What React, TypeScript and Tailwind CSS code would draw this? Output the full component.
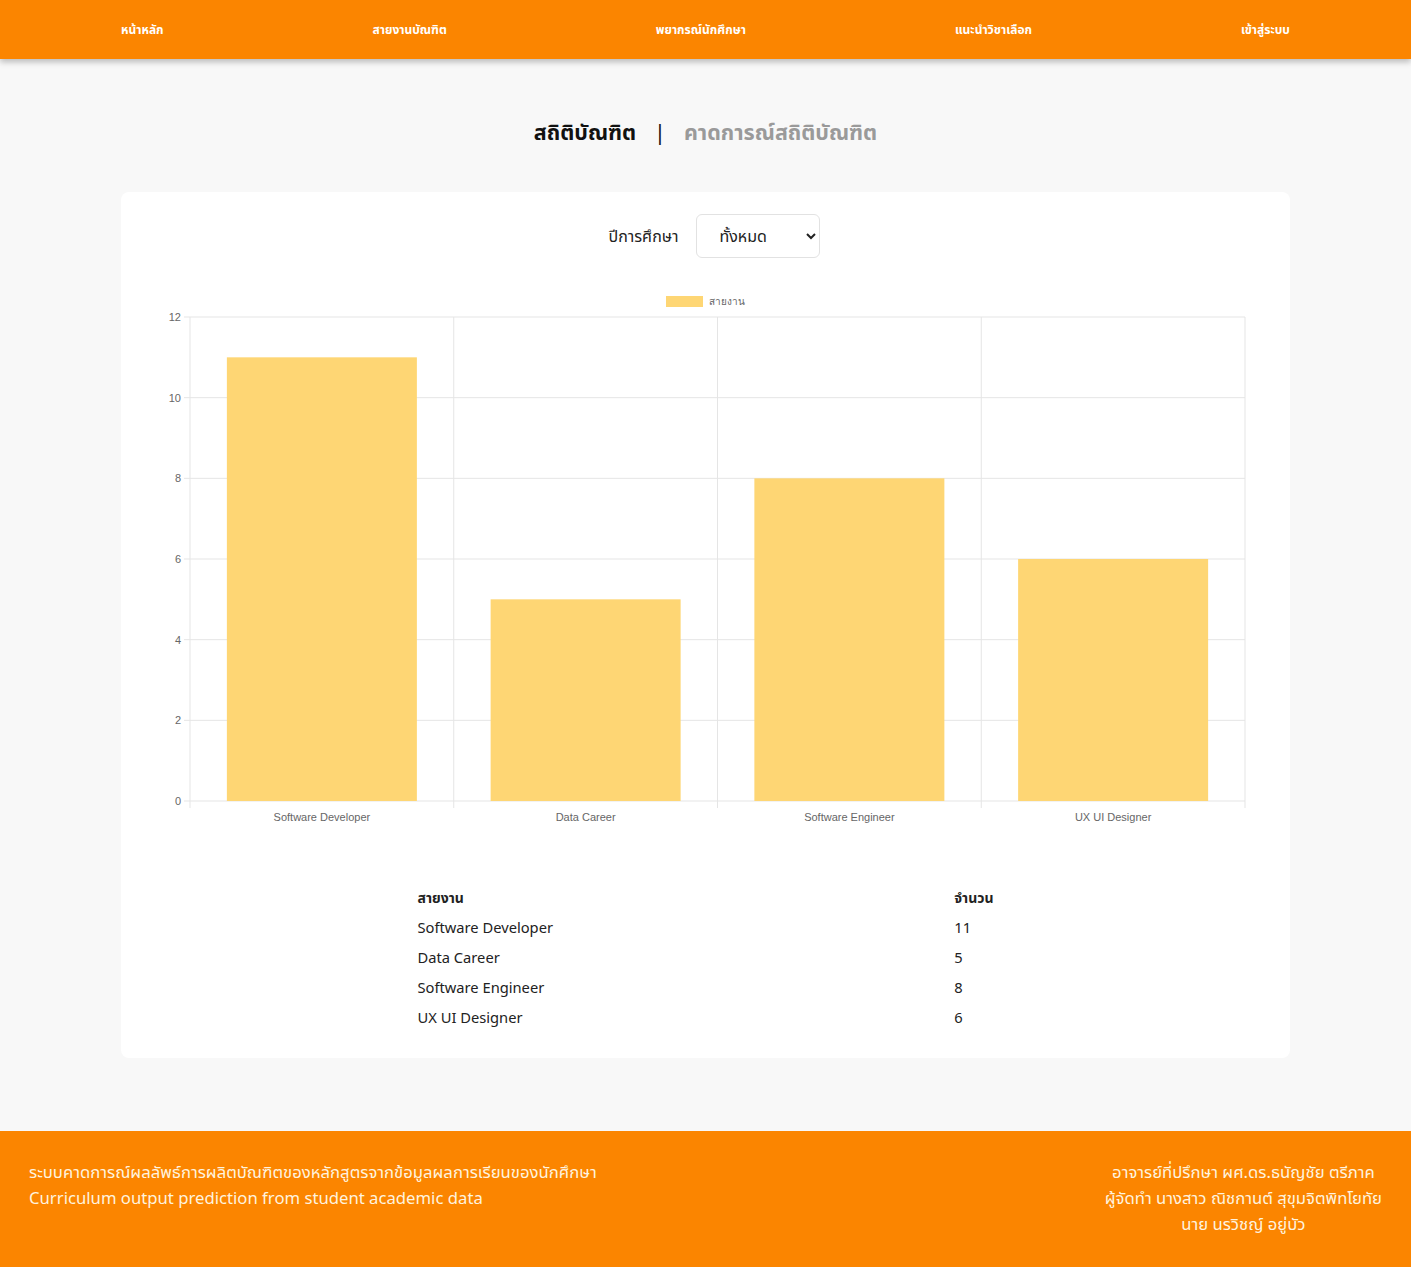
const navItems = ["หน้าหลัก", "สายงานบัณฑิต", "พยากรณ์นักศึกษา", "แนะนำวิชาเลือก", "เข้าสู่ระบบ"];

const careers = [
  { name: "Software Developer", count: 11 },
  { name: "Data Career", count: 5 },
  { name: "Software Engineer", count: 8 },
  { name: "UX UI Designer", count: 6 },
];

const font = "font-['Noto_Sans','Noto_Sans_Thai',sans-serif]";

function BarChart() {
  // plot coords inside svg (svg origin = card left, y 285 on page)
  const left = 69;
  const right = 1124;
  const top = 32;
  const bottom = 516;
  const max = 12;
  const step = (right - left) / careers.length;
  const yOf = (v: number) => bottom - ((bottom - top) * v) / max;
  const ticks = [0, 2, 4, 6, 8, 10, 12];

  return (
    <svg width="1169" height="550" viewBox="0 0 1169 550" className="block">
      {/* legend */}
      <rect x="545" y="11" width="37" height="11" fill="#fed674" />
      <text x="588" y="20" fontSize="10" fill="#666" fontFamily="Liberation Sans, sans-serif">
        สายงาน
      </text>

      {ticks.map((t) => (
        <g key={t}>
          <line x1={left - 6} x2={right} y1={yOf(t)} y2={yOf(t)} stroke="#e5e5e5" strokeWidth="1" />
          <text
            x={left - 9}
            y={yOf(t) + 4}
            fontSize="11"
            textAnchor="end"
            fill="#666"
            fontFamily="Liberation Sans, sans-serif"
          >
            {t}
          </text>
        </g>
      ))}

      {[0, 1, 2, 3, 4].map((i) => (
        <line
          key={i}
          x1={left + step * i}
          x2={left + step * i}
          y1={top}
          y2={bottom + 7}
          stroke="#e5e5e5"
          strokeWidth="1"
        />
      ))}

      {careers.map((c, i) => {
        const cx = left + step * i + step / 2;
        const w = 190;
        return (
          <g key={c.name}>
            <rect x={cx - w / 2} y={yOf(c.count)} width={w} height={bottom - yOf(c.count)} fill="#fed674" />
            <text
              x={cx}
              y={bottom + 20}
              fontSize="11"
              textAnchor="middle"
              fill="#666"
              fontFamily="Liberation Sans, sans-serif"
            >
              {c.name}
            </text>
          </g>
        );
      })}
    </svg>
  );
}

export default function App() {
  return (
    <div className={`min-h-screen bg-[#f8f8f8] ${font}`}>
      <nav className="relative z-10 flex h-[59px] items-center justify-between bg-[#fb8500] px-[121px] shadow-[0_3px_6px_rgba(0,0,0,0.25)]">
        {navItems.map((item) => (
          <a key={item} className="text-[12px] font-bold text-white" href="#">
            {item}
          </a>
        ))}
      </nav>

      <main className="px-[121px] pt-[57px] pb-[73px]">
        <div className="flex items-center justify-center gap-[18px] text-[21.5px] font-bold">
          <span className="text-[#111]">สถิติบัณฑิต</span>
          <span className="font-normal text-[#111]">|</span>
          <span className="text-[#9a9a9a]">คาดการณ์สถิติบัณฑิต</span>
        </div>

        <section className="mt-[44px] rounded-lg bg-white pt-[22px] pb-[26px]">
          <div className="flex items-center justify-center gap-[18px] pl-[18px]">
            <label className="text-[16px] text-[#222]">ปีการศึกษา</label>
            <select className="h-[44px] w-[124px] rounded-md border border-[#e2e2e2] bg-white pl-[18px] pr-2 text-[16px] text-[#222] outline-none">
              <option>ทั้งหมด</option>
            </select>
          </div>

          <div className="mt-[27px]">
            <BarChart />
          </div>

          <table className="mx-auto mt-[48px] w-[576px] text-left text-[14.7px] text-[#222]">
            <thead>
              <tr className="h-[29px]">
                <th className="w-[538px] text-[14px] font-bold">สายงาน</th>
                <th className="text-[14px] font-bold">จำนวน</th>
              </tr>
            </thead>
            <tbody>
              {careers.map((c) => (
                <tr key={c.name} className="h-[30px]">
                  <td>{c.name}</td>
                  <td>{c.count}</td>
                </tr>
              ))}
            </tbody>
          </table>
        </section>
      </main>

      <footer className="flex h-[136px] items-start justify-between bg-[#fb8500] px-[29px] pt-[28px] text-[16.7px] leading-[26px] text-[#fff3df]">
        <div>
          <p>ระบบคาดการณ์ผลลัพธ์การผลิตบัณฑิตของหลักสูตรจากข้อมูลผลการเรียนของนักศึกษา</p>
          <p>Curriculum output prediction from student academic data</p>
        </div>
        <div className="text-center">
          <p>อาจารย์ที่ปรึกษา ผศ.ดร.ธนัญชัย ตรีภาค</p>
          <p>ผู้จัดทำ นางสาว ณิชกานต์ สุขุมจิตพิทโยทัย</p>
          <p>นาย นรวิชญ์ อยู่บัว</p>
        </div>
      </footer>
    </div>
  );
}
